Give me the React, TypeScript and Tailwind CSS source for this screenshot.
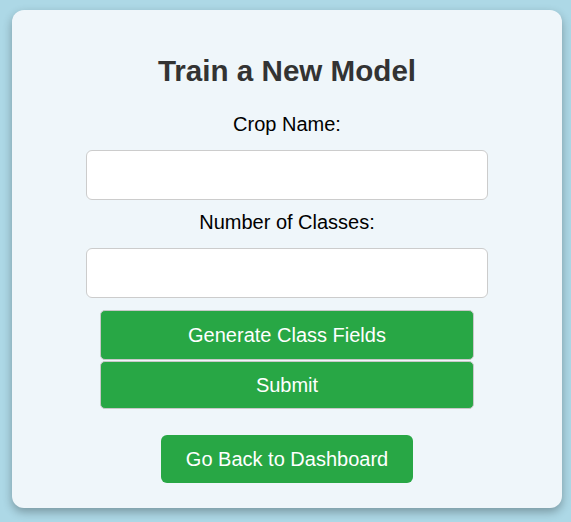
export default function App() {
  return (
    <div
      className="min-h-[522px] w-full bg-[#add8e6] pt-[10px] pl-[12px]"
      style={{ fontFamily: '"Liberation Sans", Arial, sans-serif' }}
    >
      <div className="flex h-[498px] w-[550px] flex-col items-center rounded-[12px] bg-[#eff6fa] pt-[44px] shadow-[0_4px_10px_rgba(0,0,0,0.3)]">
        <h2 className="text-[29.6px] font-bold leading-[34px] text-[#333333]">Train a New Model</h2>
        <label className="mt-[25px] text-[20px] leading-[23px] text-black">Crop Name:</label>
        <input
          type="text"
          className="mt-[14px] h-[50px] w-[402px] rounded-[6px] border border-[#cccccc] bg-white"
        />
        <label className="mt-[11px] text-[20px] leading-[23px] text-black">Number of Classes:</label>
        <input
          type="text"
          className="mt-[14px] h-[50px] w-[402px] rounded-[6px] border border-[#cccccc] bg-white"
        />
        <button className="mt-[12px] h-[50px] w-[374px] rounded-[5px] border border-[#c8c8c8] bg-[#28a745] text-[20px] text-white">
          Generate Class Fields
        </button>
        <button className="mt-[1px] h-[48px] w-[374px] rounded-[5px] border border-[#c8c8c8] bg-[#28a745] text-[20px] text-white">
          Submit
        </button>
        <button className="mt-[26px] h-[48px] w-[252px] rounded-[6px] bg-[#28a745] text-[20px] text-white">
          Go Back to Dashboard
        </button>
      </div>
    </div>
  );
}
